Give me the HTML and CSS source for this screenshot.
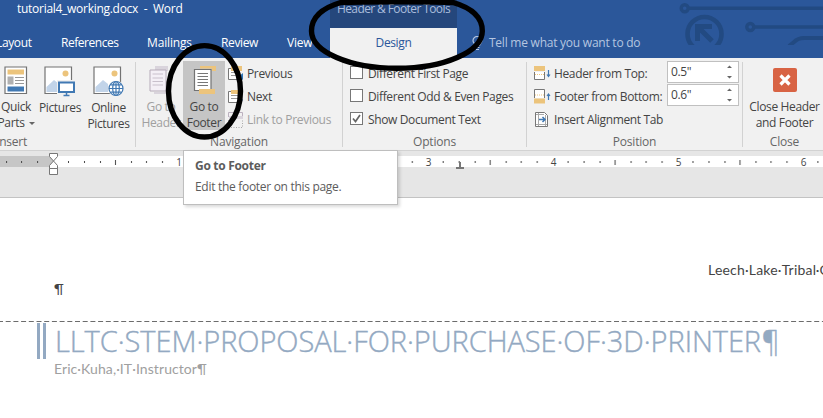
FILE: index.html
```html
<!DOCTYPE html>
<html lang="en">
<head>
<meta charset="utf-8">
<title>tutorial4_working.docx - Word</title>
<link rel="stylesheet" href="styles.css">
</head>
<body>
<header class="top">
  <svg class="circuit" width="150" height="45" viewBox="673 0 150 45" fill="none" stroke="#224a82" stroke-width="3.4">
    <circle cx="684.7" cy="8.3" r="3.5"/><path d="M688 8.3H823"/>
    <circle cx="750.3" cy="27" r="3.5"/><path d="M754 27H823"/>
    <circle cx="704.5" cy="34" r="17" stroke-width="4.6"/>
    <path d="M697.5 41V26.500H712M698 27L712 41" stroke-width="5"/>
    <path d="M789 46L794 42Q798 38 804 38H823" stroke-width="4"/>
  </svg>
  <div class="titlebar">
    <span class="doc-name">tutorial4_working.docx&nbsp; -&nbsp; Word</span>
    <span class="context">Header &amp; Footer Tools</span>
  </div>
  <nav class="tabs">
    <span class="tab layout">Layout</span>
    <span class="tab references">References</span>
    <span class="tab mailings">Mailings</span>
    <span class="tab review">Review</span>
    <span class="tab view">View</span>
    <span class="tab active">Design</span>
    <span class="tell"><svg width="11" height="15" viewBox="0 0 11 15" fill="none" stroke="#b5c6e0" stroke-width="1.2"><path d="M3.500 9.500C3 7.500 1 7 1 4.800A4.300 4.300 0 0 1 9.800 4.800C9.800 7 8 7.500 7.500 9.500ZM3.500 11.500H7.500M4 13.500H7"/></svg><span>Tell me what you want to do</span></span>
  </nav>
</header>

<main class="ribbon">
  <section class="group insert">
    <div class="body">
      <div class="big quick">
        <svg width="24" height="30" viewBox="0 0 24 30"><path d="M1 1H22.500V27.500H1Z" fill="#fff" stroke="#737373" stroke-width="1.200"/><path d="M3.500 3.500H20V8.500H3.500Z" fill="#ecc47c"/><path d="M3.500 10.500H9.500V18.500H3.500Z" fill="#b0b0b0"/><path d="M11 11.500H20M11 14.500H20M11 17.500H20" stroke="#999"/><path d="M3.500 20.500H20V25.500H3.500Z" fill="#4179b3"/></svg>
        <span>Quick</span><span>Parts<i class="caret"></i></span>
      </div>
      <div class="big pictures">
        <svg width="32" height="31" viewBox="0 0 32 31"><path d="M1 1H27.500V27.500H1Z" fill="#fff" stroke="#737373" stroke-width="1.200"/><circle cx="21.500" cy="7.500" r="3" fill="#ecc47c"/><path d="M2.500 26V21L10 14L15 18V26Z" fill="#c2d4e9"/><path d="M13 14H31V29H13Z" fill="#f1f1f1"/><path d="M15 16.500H30V26H15Z" fill="#fff" stroke="#4179b3" stroke-width="2"/><path d="M22.500 26V29.500M19.500 29.500H25.500" stroke="#4179b3" stroke-width="1.500"/></svg>
        <span>Pictures</span>
      </div>
      <div class="big online">
        <svg width="32" height="31" viewBox="0 0 32 31"><path d="M1 1H27.500V27.500H1Z" fill="#fff" stroke="#737373" stroke-width="1.200"/><circle cx="21.500" cy="7.500" r="3" fill="#ecc47c"/><path d="M2.500 26V21L10 14L15 18V26Z" fill="#c2d4e9"/><circle cx="23" cy="22.500" r="8" fill="#f1f1f1"/><g fill="#fff" stroke="#4179b3" stroke-width="1.200"><circle cx="23" cy="22.500" r="7"/><ellipse cx="23" cy="22.500" rx="3.300" ry="7"/><path d="M23 15.500V29.500M16 22.500H30M17.500 18.800H28.500M17.500 26.200H28.500"/></g></svg>
        <span>Online</span><span>Pictures</span>
      </div>
    </div>
    <div class="caption">Insert</div>
  </section>

  <section class="group nav">
    <div class="body">
      <div class="big go-header">
        <svg width="26" height="30" viewBox="0 0 26 30"><path d="M7 0H20V5H7Z" fill="#d9d4dc"/><path d="M2 4H18V25H2Z" fill="#f4eff6" stroke="#b5abb8"/><path d="M4.500 8H15M4.500 12H15M4.500 15.500H15M4.500 19H15" stroke="#c9c0cc"/><path d="M6 26H19V28H6Z" fill="#d9d4dc"/></svg>
        <span>Go to</span><span>Header</span>
      </div>
      <div class="big go-footer">
        <svg width="26" height="30" viewBox="0 0 26 30"><path d="M9 0H25V5H21V2.500H9Z" fill="#ecc47c"/><path d="M3.500 3.500H20V24.500H3.500Z" fill="#fff" stroke="#737373" stroke-width="1.200"/><path d="M6.500 7.500H17M6.500 10.500H17M6.500 13.500H17M6.500 16.500H17M6.500 19.500H17" stroke="#777"/><path d="M8 23H24V28H8Z" fill="#ecc47c"/></svg>
        <span>Go to</span><span>Footer</span>
      </div>
      <div class="list">
        <div class="row"><svg width="16" height="16" viewBox="0 0 16 16"><path d="M.5 2.500H11.500V13.500H.5Z" fill="#fff" stroke="#777"/><path d="M3 6.500H10M3 9.500H10" stroke="#999"/><path d="M3 0H14V5H3Z" fill="#ecc47c"/><path d="M10 11L15 7V14Z" fill="#2e75b6"/></svg><span>Previous</span></div>
        <div class="row"><svg width="16" height="16" viewBox="0 0 16 16"><path d="M.5 2.500H11.500V13.500H.5Z" fill="#fff" stroke="#777"/><path d="M3 6.500H10M3 9.500H10" stroke="#999"/><path d="M3 1H14V5H3Z" fill="#ecc47c"/><path d="M11 7L15 11L11 14Z" fill="#2e75b6"/></svg><span>Next</span></div>
        <div class="row disabled"><svg width="16" height="16" viewBox="0 0 16 16"><path d="M.5 5V.5H14.500V5" fill="none" stroke="#bbb0bf"/><path d="M1 4H15V7H1Z" fill="#d9d4dc"/><path d="M.5 8V15.500H14.500V8" fill="none" stroke="#a9a9a9" stroke-dasharray="1 1.500"/></svg><span>Link to Previous</span></div>
      </div>
    </div>
    <div class="caption">Navigation</div>
  </section>

  <section class="group options">
    <div class="body">
      <div class="list">
        <div class="row"><i class="check"></i><span>Different First Page</span></div>
        <div class="row"><i class="check"></i><span>Different Odd &amp; Even Pages</span></div>
        <div class="row"><i class="check"><svg width="11" height="11" viewBox="0 0 11 11"><path d="M2 5.500L4.500 8.500L9 2" fill="none" stroke="#666" stroke-width="1.700"/></svg></i><span>Show Document Text</span></div>
      </div>
    </div>
    <div class="caption">Options</div>
  </section>

  <section class="group position">
    <div class="body">
      <div class="list">
        <div class="row"><svg width="17" height="15" viewBox="0 0 17 15"><path d="M.5 6V13.500H10.500V6" fill="#fff" stroke="#777"/><path d="M0 0H11V5H0Z" fill="#ecc47c"/><path d="M1 8.500H10" stroke="#ecc47c" stroke-dasharray="1 1"/><path d="M14.500 4V10M13 8.500L14.500 10.500L16 8.500" fill="none" stroke="#4179b3" stroke-width="1.200"/></svg><span>Header from Top:</span></div>
        <div class="row"><svg width="17" height="15" viewBox="0 0 17 15"><path d="M.5 9V.5H10.500V9" fill="#fff" stroke="#777"/><path d="M0 9.500H11V14.500H0Z" fill="#ecc47c"/><path d="M1 6H10" stroke="#ecc47c" stroke-dasharray="1 1"/><path d="M14.500 11V5M13 7L14.500 5L16 7" fill="none" stroke="#4179b3" stroke-width="1.200"/></svg><span>Footer from Bottom:</span></div>
        <div class="row"><svg width="17" height="15" viewBox="0 0 17 15"><path d="M1.500.5H10.500L13.500 3.500V14.500H1.500Z" fill="#fff" stroke="#777"/><path d="M4.500 1V14M11.500 3V14M2 2.500H10M2 12.500H13" stroke="#aaa"/><path d="M5 7.500H11M8.500 5L11 7.500L8.500 10" fill="none" stroke="#4179b3" stroke-width="1.500"/></svg><span>Insert Alignment Tab</span></div>
      </div>
      <div class="spins">
        <div class="spin"><span>0.5"</span><svg width="7" height="14" viewBox="0 0 7 14"><path d="M1 3L3.500 .5L6 3ZM1 11H6L3.500 13.500Z" fill="#666"/></svg></div>
        <div class="spin"><span>0.6"</span><svg width="7" height="14" viewBox="0 0 7 14"><path d="M1 3L3.500 .5L6 3ZM1 11H6L3.500 13.500Z" fill="#666"/></svg></div>
      </div>
    </div>
    <div class="caption">Position</div>
  </section>

  <section class="group close">
    <div class="body">
      <div class="big">
        <svg width="24" height="30" viewBox="0 0 24 30"><rect y="2" width="24" height="24" rx="2" fill="#d86344"/><path d="M7.500 9.500L16.500 18.500M16.500 9.500L7.500 18.500" stroke="#fff" stroke-width="3.200"/></svg>
        <span>Close Header</span><span>and Footer</span>
      </div>
    </div>
    <div class="caption">Close</div>
  </section>
</main>

<div class="ruler">
  <svg width="823" height="24" viewBox="0 0 823 24">
    <defs><pattern id="inch" x="53" width="124.900" height="11" patternUnits="userSpaceOnUse"><path d="M15 5h1v2h-1zM31 5h1v2h-1zM47 5h1v2h-1zM62 4h1v5h-1zM78 5h1v2h-1zM93 5h1v2h-1zM109 5h1v2h-1z" fill="#444"/></pattern></defs>
    <path d="M0 0H53V11H0Z" fill="#c6c6c6"/><path d="M53 0H823V11H53Z" fill="#fff"/><path d="M0 0H823V11H0Z" fill="url(#inch)"/>
    <g class="digits"><text x="179" y="9.500">1</text><text x="304" y="9.500">2</text><text x="428.500" y="9.500">3</text><text x="553.500" y="9.500">4</text><text x="678.500" y="9.500">5</text><text x="803.500" y="9.500">6</text></g>
  </svg>
</div>
<svg class="markers" width="420" height="24" viewBox="46 152 420 24" fill="#fff" stroke="#777"><path d="M49.500 153.500H57.500V156.500L53.500 161L49.500 156.500ZM53.500 161L57.500 165.500V168.500H49.500V165.500ZM49.500 168.500H57.500V174.500H49.500Z"/><path d="M460 162V168M456 168H464" fill="none" stroke-width="2"/></svg>

<article class="page">
  <p class="org">Leech·Lake·Tribal·College</p>
  <p class="mark">¶</p>
  <svg class="boundary" width="823" height="1"><path d="M-2 .5H823" stroke="#6c6c6c" stroke-dasharray="5 2.700"/></svg>
  <h1>LLTC·STEM·PROPOSAL·FOR·PURCHASE·OF·3D·PRINTER¶</h1>
  <p class="author">Eric·Kuha,·IT·Instructor¶</p>
</article>

<aside class="tooltip"><b>Go to Footer</b><span>Edit the footer on this page.</span></aside>

<svg class="rings" width="823" height="150" viewBox="0 0 823 150" fill="none" stroke="#000" stroke-width="5.400">
  <ellipse cx="204.500" cy="91.300" rx="36" ry="45.700"/>
  <path d="M311.500 31C311.500 18 322 8 341 2.500C360 1.500 437 1.500 453 2.500C472 8 482.300 18 482.300 31C482.300 52 444 68.300 397 68.300C350 68.300 311.500 52 311.500 31Z"/>
</svg>
</body>
</html>
```

FILE: styles.css
```css
* { box-sizing: border-box; }
body { margin: 0; width: 823px; height: 418px; position: relative; overflow: hidden; background: #fff; font: 12px/16px "Open Sans", "Noto Sans", sans-serif; letter-spacing: -.36px; color: #444; white-space: nowrap; }
svg { display: block; flex: none; }

.top { position: relative; height: 58px; background: #2b579a; color: #fff; }
.circuit { position: absolute; right: 0; top: 0; }
.titlebar { display: flex; height: 28px; }
.doc-name { width: 313px; margin-left: 17px; padding-top: 1px; letter-spacing: -.28px; }
.context { width: 127px; padding-top: 1px; background: #25477c; color: #a9bcdb; text-align: center; letter-spacing: -.6px; }
.tabs { display: flex; height: 30px; line-height: 30px; }
.tab { flex: none; }
.layout { width: 65px; margin-left: -4px; }
.references { width: 86px; letter-spacing: -.45px; }
.mailings { width: 74px; letter-spacing: -.15px; }
.review { width: 66px; }
.view { width: 43px; letter-spacing: -.2px; }
.active { width: 127px; background: #f1f1f1; color: #2b579a; text-align: center; }
.tell { display: flex; align-items: center; gap: 6px; margin-left: 15px; color: #b5c6e0; letter-spacing: -.24px; }

.ribbon { display: flex; height: 93px; padding-top: 4px; background: #f1f1f1; border-bottom: 1px solid #d2d2d2; }
.group { display: flex; flex-direction: column; flex: none; height: 85px; border-right: 1px solid #d2d2d2; }
.body { display: flex; height: 71px; }
.caption { height: 14px; line-height: 18px; text-align: center; color: #666; letter-spacing: -.2px; }
.insert { width: 136px; }
.nav { width: 207px; }
.options { width: 184px; }
.position { width: 216px; }
.close { width: 80px; padding-left: 3px; border: 0; }
.big { display: flex; flex-direction: column; align-items: center; padding-top: 4px; }
.big svg { margin-bottom: 3px; }
.quick { width: 32px; }
.pictures { width: 56px; }
.online { width: 41px; }
.close .big { width: 80px; }
.caret { display: inline-block; margin-left: 4px; vertical-align: 2px; border: 3px solid transparent; border-top-color: #666; border-bottom: 0; }
.insert .caption { text-align: left; margin-left: -4px; }
.go-header { width: 47px; color: #a0a0a0; padding-left: 3px; }
.go-footer { width: 42px; height: 69px; margin-top: -1px; padding-top: 5px; background: #c5c5c5; }
.list { display: flex; flex-direction: column; }
.row { display: flex; align-items: center; height: 23px; }
.nav .list { margin-left: 3px; }
.nav .row { gap: 3px; }
.nav .disabled { color: #a0a0a0; letter-spacing: -.3px; }
.options .list { margin-left: 7px; }
.options .row { gap: 5px; }
.check { width: 13px; height: 13px; margin-top: -2px; border: 1px solid #777; background: #fff; }
.position .list { width: 133px; margin-left: 7px; }
.position .row { gap: 3px; }
.spins { display: flex; flex-direction: column; gap: 1px; margin-top: -1px; }
.spin { display: flex; align-items: center; justify-content: space-between; width: 72px; height: 22px; padding: 0 5px 0 3px; border: 1px solid #c0c0c0; background: #fff; }

.ruler { height: 47px; padding-top: 5px; background: #e6e6e6; border-bottom: 1px solid #c3c3c3; }
.digits { font-size: 10px; fill: #444; text-anchor: middle; }
.markers { position: absolute; left: 46px; top: 152px; }

.page { display: flex; flex-direction: column; font-family: Lato, sans-serif; letter-spacing: 0; }
.page p, .page h1 { margin: 0; }
.org { padding: 64px 0 0 708px; font-size: 14px; letter-spacing: .2px; }
.mark { padding: 3px 0 0 54px; font-size: 14px; height: 43px; }
.page h1 { height: 36px; margin: 1px 0 0 37px; padding-left: 18px; font: 300 29px/36px "Open Sans", sans-serif; letter-spacing: -.06px; color: #93a9c2; -webkit-text-stroke: .4px #93a9c2; background: linear-gradient(90deg, #93a9c2 3px, transparent 3px 6px, #93a9c2 6px 9px, transparent 9px); }
.author { padding: 2px 0 0 54px; font-size: 14px; letter-spacing: .08px; color: #a0a0a0; }

.tooltip { position: absolute; left: 183px; top: 150px; display: flex; flex-direction: column; gap: 5px; width: 215px; height: 55px; padding: 7px 11px; align-items: flex-start; border: 1px solid #bebebe; background: #fff; color: #5c5c5c; letter-spacing: -.3px; box-shadow: 2px 2px 3px rgba(0,0,0,.15); }
.rings { position: absolute; left: 0; top: 0; }
```
